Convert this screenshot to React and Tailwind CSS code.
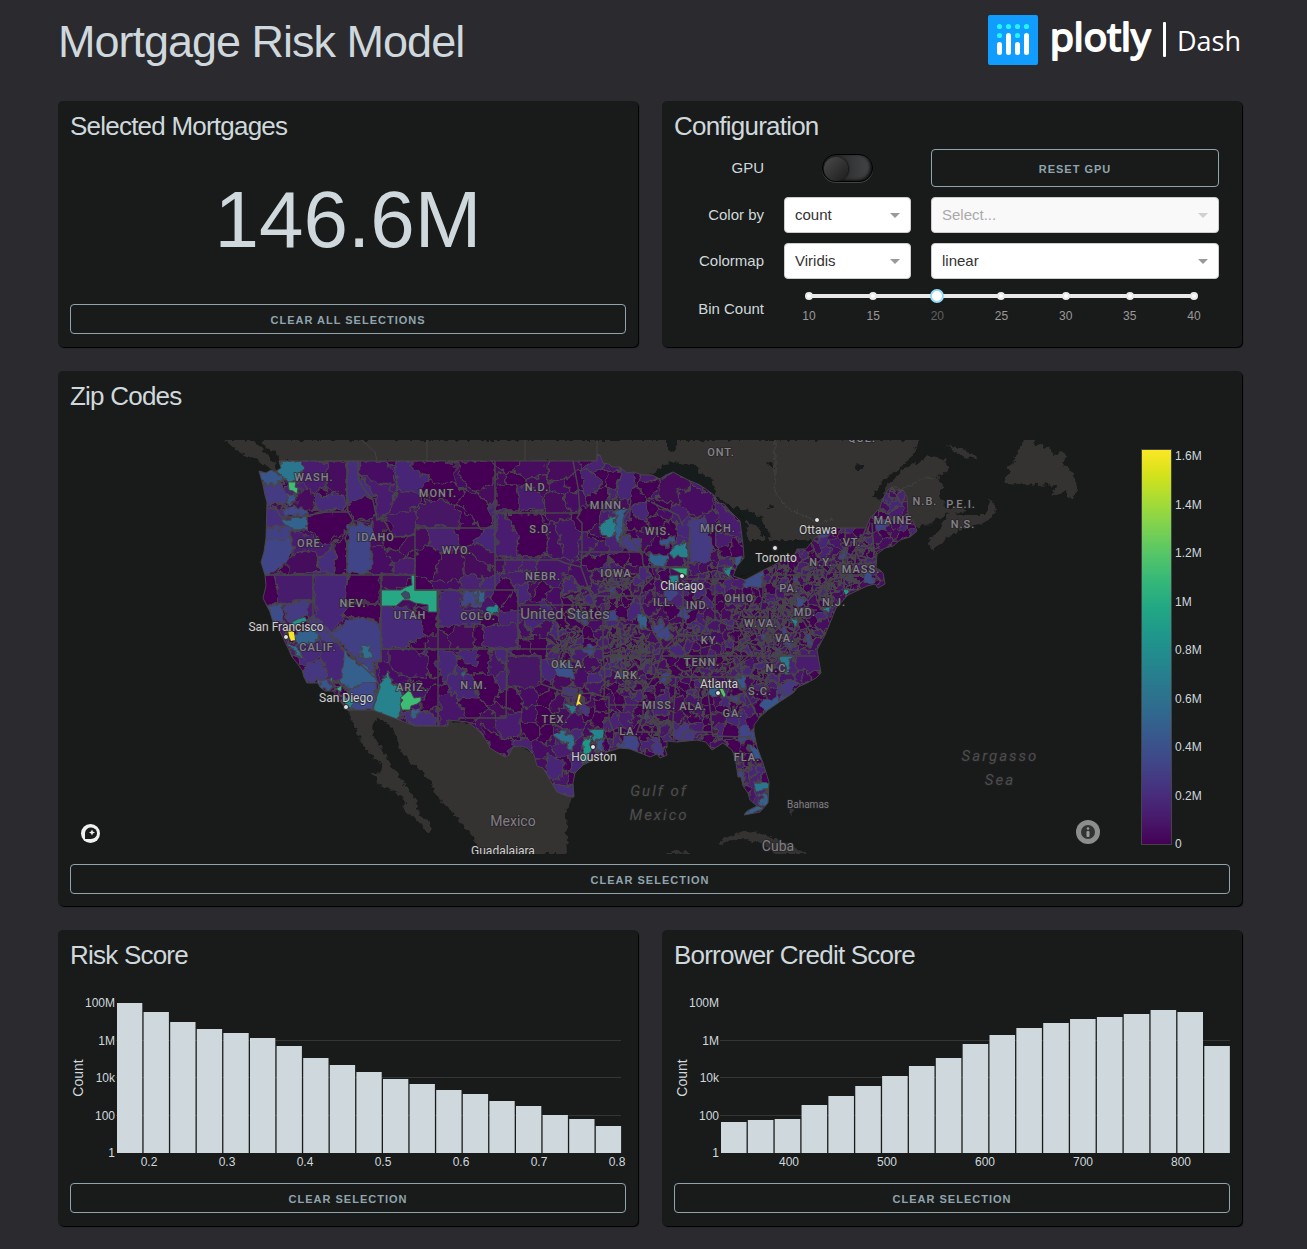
import React from "react";

/* ---------- map data ---------- */

const US_OUTLINE =
  "259,471 266,473 271,470 275,472 281,468 279,461 597,461 597,454 600,455 603,463 609,464 612,467 620,467 627,473 634,472 642,475 652,475 660,479 666,475 673,472 688,480 700,485 714,495 719,503 724,504 730,511 740,521 743,545 744,558 737,566 733,576 745,580 762,571 778,563 795,554 797,549 806,549 815,538 829,528 866,528 870,518 873,515 880,508 882,500 888,490 892,487 895,490 903,490 907,497 908,514 913,521 917,531 910,537 900,540 893,546 885,548 877,554 876,568 880,570 883,573 885,584 878,588 875,584 867,586 848,595 836,608 832,618 825,635 817,650 821,673 816,678 807,683 798,687 793,693 778,703 768,710 760,717 754,725 754,732 757,747 763,763 769,782 768,803 760,812 744,815 747,811 757,806 750,800 748,793 743,786 741,777 738,777 736,763 734,755 732,750 723,743 712,750 706,742 697,740 677,742 667,741 667,748 664,746 667,755 660,758 657,754 650,757 643,754 640,753 630,749 620,748 607,752 600,757 583,765 575,773 573,783 574,797 567,796 557,792 550,780 543,768 537,766 534,755 527,748 520,746 513,747 509,755 505,757 498,753 490,748 486,740 480,732 468,722 448,720 448,726 415,726 373,710 347,710 337,697 333,691 325,691 320,687 318,683 307,683 304,677 302,670 297,663 292,657 289,650 285,642 278,627 273,622 270,612 263,598 266,586 265,575 261,562 264,552 266,538 267,502 265,495 263,485";

const LAND = [
  "225,440 253,440 262,449 276,465 275,472 262,462 245,455 236,450",
  "262,440 920,440 912,455 900,468 885,478 872,497 880,500 890,482 905,468 928,457 945,459 948,470 935,477 943,485 940,495 946,508 960,515 985,515 990,498 997,510 985,522 955,532 945,540 933,550 927,542 940,530 949,512 930,524 917,527 900,540 600,540 590,461 279,461 276,452 265,447",
  "1023,440 1035,440 1034,446 1043,443 1044,449 1050,447 1053,456 1063,450 1066,456 1063,464 1070,470 1077,480 1078,492 1070,499 1066,490 1060,493 1052,497 1056,486 1047,484 1040,485 1004,483 1010,472 1006,467 1013,465 1018,450",
  "946,445 955,447 968,451 977,459 965,457",
  "946,509 957,507 968,511 955,513",
  "347,708 373,706 415,722 448,720 480,725 510,740 545,762 560,788 573,795 566,813 567,840 568,854 480,854 473,837 453,813 440,800 434,790 430,780 421,772 408,760 400,750 393,728 380,718 372,722 373,735 385,755 398,775 416,800 420,818 428,820 432,830 427,833 420,822 404,810 405,803 397,792 380,785 372,774 382,773 383,765 376,760 362,745 358,735",
  "718,843 727,837 743,832 760,833 773,838 793,847 806,854 775,854 765,845 743,838 731,841 720,845",
  "665,854 675,851 690,852 690,854",
  "789,806 793,809 793,815 790,811",
];

const LAKES = [
  "645,481 655,470 664,465 674,462 690,465 697,465 700,474 712,478 716,497 745,515 749,545 757,570 735,580 725,560 720,510 700,490 673,474 660,480",
  "723,506 735,508 750,511 760,516 766,530 772,536 766,541 758,527 748,522 738,514",
  "733,577 745,578 765,566 790,558 796,556 800,546 779,547 785,543 810,541 812,546 800,552 797,558 760,575 745,584",
  "667,440 676,440 677,450 671,453 667,449",
  "767,462 774,464 774,468 769,466",
  "855,466 862,464 862,470 857,470",
  "768,505 774,506 772,508 768,508",
];

const PATCHES = [
  ["279,461 304,461 303,470 299,476 292,482 283,478 277,470", "#2a768e"],
  ["255,470 275,470 284,480 283,484 262,485", "#39558c"],
  ["260,485 284,484 287,500 285,504 262,505", "#443a83"],
  ["286,493 297,494 296,503 288,504", "#39568c"],
  ["304,461 326,461 326,483 315,495 300,482", "#481d6f"],
  ["299,490 312,488 315,510 297,510", "#46085c"],
  ["326,461 347,461 347,505 343,495 326,487", "#460b5e"],
  ["316,496 343,495 345,510 315,510", "#472c7a"],
  ["262,505 278,508 290,512 282,528 262,526", "#472d7b"],
  ["284,505 308,510 308,516 285,515", "#3f4889"],
  ["282,520 308,516 308,530 295,530 283,525", "#33638d"],
  ["308,515 325,511 350,510 352,520 347,530 335,538 328,543 318,540 308,530", "#440256"],
  ["258,528 292,528 291,540 258,540", "#423f85"],
  ["258,540 292,540 288,562 270,574 258,574", "#404588"],
  ["292,530 318,540 333,545 320,560 310,550 292,560", "#481f70"],
  ["288,560 298,552 315,550 320,565 320,574 288,574", "#460a5d"],
  ["320,560 334,545 335,574 320,574", "#472d7b"],
  ["335,544 347,532 347,574 335,574", "#440154"],
  ["348,461 359,461 359,478 372,490 375,495 352,505 348,505", "#472d7b"],
  ["348,505 365,496 376,500 377,515 372,522 352,518", "#450559"],
  ["360,475 392,487 393,505 382,518 376,512 376,497", "#481f70"],
  ["359,461 385,461 395,475 393,485 378,482 360,474", "#471063"],
  ["347,528 358,521 372,525 372,545 370,574 347,574", "#404588"],
  ["385,515 418,508 415,535 395,535", "#471668"],
  ["372,545 385,548 393,562 393,574 370,574", "#471063"],
  ["393,562 415,556 415,574 393,574", "#481b6d"],
  ["413,461 455,461 455,480 440,484 428,476 413,472", "#440154"],
  ["418,502 450,500 460,512 460,527 416,527", "#471365"],
  ["456,461 494,461 494,484 480,490 464,486", "#440154"],
  ["314,574 347,574 347,610 333,635 315,615", "#472878"],
  ["348,574 381,574 381,602 345,602", "#440154"],
  ["340,615 350,605 381,603 381,623 360,618", "#440154"],
  ["333,635 345,620 360,618 381,625 381,648 374,675", "#423f85"],
  ["361,646 371,646 371,657 361,658", "#2e6f8e"],
  ["274,574 314,574 314,600 300,600 280,605", "#471b6c"],
  ["260,574 274,574 280,605 268,605 260,598", "#450457"],
  ["283,605 308,600 308,615 290,625", "#443a83"],
  ["266,607 280,605 285,625 272,622", "#3d4e8a"],
  ["297,645 318,640 322,655 305,668 300,664", "#46297a"],
  ["318,640 335,637 345,655 342,680 328,682 322,660", "#472777"],
  ["303,667 322,660 328,682 305,683", "#453781"],
  ["314,615 333,635 340,645 322,640 310,630", "#443a83"],
  ["295,634 310,629 320,634 315,642 298,645", "#33628d"],
  ["285,643 297,648 303,657 296,655", "#2c728e"],
  ["343,650 375,675 377,680 360,685 348,690 342,680", "#34618d"],
  ["350,690 365,682 376,682 377,710 352,710", "#3e4a89"],
  ["343,694 356,700 352,706 343,706", "#238a8d"],
  ["318,682 330,684 328,692 320,688", "#39568c"],
  ["386,674 389,675 390,683 402,688 402,700 399,722 372,712 376,700 378,688", "#25838e"],
  ["399,714 408,712 432,712 437,727 415,727", "#472d7b"],
  ["410,713 422,706 422,710 414,718", "#34608d"],
  ["389,648 415,648 428,658 424,678 400,676 389,665", "#471164"],
  ["428,648 438,648 438,678 426,676", "#440154"],
  ["439,697 455,692 466,720 448,720 448,727 439,727", "#471668"],
  ["381,606 425,608 425,635 405,648 381,648", "#472a79"],
  ["415,608 437,612 437,635 425,635", "#440256"],
  ["438,590 460,590 462,610 482,612 480,625 438,625", "#472777"],
  ["460,592 475,590 480,600 478,608 465,605", "#3f4788"],
  ["475,590 485,592 484,602 477,602", "#33638d"],
  ["488,608 495,605 498,612 490,616", "#23888e"],
  ["483,626 517,624 518,648 484,648", "#481b6d"],
  ["496,512 505,514 518,535 519,558 496,558", "#481d6f"],
  ["505,513 540,514 548,540 545,557 520,557 518,535", "#450457"],
  ["518,485 535,488 545,505 542,511 518,510", "#481d6f"],
  ["496,485 517,485 518,511 496,511", "#450457"],
  ["600,530 605,520 615,516 618,529 607,538", "#27808e"],
  ["616,510 625,508 622,545 615,535", "#34618d"],
  ["622,536 642,540 640,552 622,548", "#443a83"],
  ["620,470 636,472 630,500 618,500", "#472777"],
  ["670,553 677,543 688,542 688,557 672,556", "#27818e"],
  ["648,555 668,555 666,567 652,566", "#33638d"],
  ["660,540 674,536 672,546 662,546", "#39568c"],
  ["660,479 673,472 688,480 687,492 676,505 658,500", "#46085c"],
  ["677,492 688,490 689,482 712,495 712,510 696,518 680,505", "#471063"],
  ["690,520 705,518 712,540 710,562 690,565", "#443a83"],
  ["714,498 740,522 742,540 720,528", "#481d6f"],
  ["723,568 732,567 733,573 728,579", "#24868e"],
  ["732,560 742,556 740,568", "#39568c"],
  ["743,578 762,570 762,586 745,588", "#3d4e8a"],
  ["843,591 852,587 846,598", "#1f9a8a"],
  ["820,607 833,607 827,613", "#24868e"],
  ["793,616 798,619 798,625 793,624", "#24868e"],
  ["793,596 808,600 800,606", "#3d4e8a"],
  ["862,575 872,572 872,582 864,582", "#3d4e8a"],
  ["781,655 791,656 788,665 790,673 785,671", "#2a788e"],
  ["708,687 716,685 720,695 712,698", "#34618d"],
  ["735,677 745,676 746,688 733,686", "#39568c"],
  ["760,702 778,696 782,706 765,714", "#39568c"],
  ["778,685 797,680 793,696 775,692", "#453781"],
  ["793,654 818,650 822,672 798,670", "#481b6d"],
  ["748,746 757,748 762,760 752,756", "#39568c"],
  ["754,782 770,782 770,790 758,790", "#2a768e"],
  ["761,795 769,793 768,806 760,803", "#34618d"],
  ["740,812 760,806 764,812 744,817", "#34618d"],
  ["737,770 745,776 742,782", "#414487"],
  ["589,730 602,728 602,738 594,743", "#24868e"],
  ["583,738 591,737 591,750 583,766", "#1f988b"],
  ["596,742 604,738 603,752 594,752", "#39568c"],
  ["552,735 562,730 575,735 573,750 563,743", "#2d718e"],
  ["563,702 570,703 577,708 572,714", "#2a788e"],
  ["563,686 575,688 578,698 566,694", "#453781"],
  ["580,705 590,704 588,716 580,712", "#453781"],
  ["555,665 570,661 575,680 557,675", "#3b518b"],
  ["582,650 593,645 593,657", "#3f4788"],
  ["624,733 638,740 640,753 624,748", "#404588"],
  ["650,735 660,742 667,755 655,755", "#453781"],
  ["461,672 467,671 465,678", "#34618d"],
  ["637,613 645,615 650,628 640,630", "#34618d"],
  ["652,622 662,620 660,634 653,632", "#414487"],
  ["456,650 478,648 476,665 466,666", "#472777"],
  ["506,655 540,656 542,682 526,690 508,684", "#471365"],
  ["498,718 520,712 520,735 505,738 494,728", "#481d6f"],
  ["480,722 495,735 512,742 508,757 490,748", "#450457"],
  ["546,755 565,762 560,780 548,778", "#472777"],
  ["550,784 575,787 575,797 555,794", "#472d7b"],
  ["673,734 684,722 694,732 694,740 675,742", "#453781"],
];

const CRISP = [
  ["381,590 401,590 406,587 412,585 411,575 415,574 415,590 437,590 437,612 428,612 428,605 415,603 409,600 403,600 396,606 381,606", "#27a884"],
  ["401,594 405,591 409,593 410,598 405,599", "#3b4a68"],
  ["288,482 296,482 295,487 298,488 297,494 293,491 289,490", "#3fbc73"],
  ["407,692 408,690 410,690 412,694 414,698 421,697 421,701 417,704 411,706 410,710 402,710 400,704 403,700 400,698", "#3dbc74"],
  ["288,630 290,627 291,631 294,632 295,640 291,641 289,636", "#f5e626"],
  ["579,693 581,694 580,698 579,701 582,705 579,704 576,706 577,702 578,698", "#f5e626"],
  ["719,688 723,688 726,695 724,698 721,693", "#54c568"],
  ["670,568 688,568 688,576 682,574", "#2ab07f"],
  ["669,576 678,575 679,582 671,584", "#23888e"],
  ["292,622 298,619 305,617 307,621 298,624 292,627", "#22908c"],
  ["336,689 342,685 341,692", "#2db27d"],
  ["330,679 332,677 332,683", "#2db27d"],
];

/* State borders as longitude,latitude runs. */
const BORDERS = [
  "-124,46.2 -123.2,46.15 -122.8,45.7 -121.2,45.65 -119.3,45.93 -119,46 -116.92,46",
  "-117.03,49 -117.03,46.4 -116.92,46 -116.5,45.5 -117.2,44.4 -117.03,44 -117.03,42",
  "-124.2,42 -111.05,42",
  "-116.05,49 -116.05,48 -115.6,47.4 -114.7,46.7 -114.4,45.5 -113.9,45.6 -113,44.45 -111.5,44.5 -111.05,44.7",
  "-111.05,45 -104.05,45",
  "-111.05,45 -111.05,41 -102.05,41 -102.05,37",
  "-104.05,49 -104.05,41",
  "-104.05,45.94 -96.56,45.94",
  "-104.05,43 -98.5,43 -97.9,42.8 -96.5,42.5",
  "-97.2,49 -96.8,47.5 -96.56,45.94 -96.85,45.6 -96.45,45.3 -96.45,43.5 -96.5,42.5 -95.8,41 -95.3,40 -94.6,39.1",
  "-96.6,43.5 -91.2,43.5",
  "-102.05,40 -95.3,40",
  "-114.04,37 -94.6,37",
  "-114.04,42 -114.04,36.2 -114.7,36.1 -114.6,35 -114.1,34.3 -114.5,33.5 -114.7,32.7",
  "-120,42 -120,39 -114.63,35",
  "-109.05,41 -109.05,31.33",
  "-103,37 -103.05,32 -106.6,32",
  "-103,36.5 -100,36.5 -100,34.55 -98.5,34.1 -97,33.8 -95.5,33.9 -94.5,33.6",
  "-94.6,39.1 -94.6,36.5 -94.43,35.4 -94.48,33.6 -94.04,33.55 -94.04,31.9 -93.6,31 -93.7,30",
  "-94.6,36.5 -90.2,36.5 -90.4,36 -89.7,36",
  "-95.75,40.6 -91.7,40.6 -91.4,40.4",
  "-94.04,33 -91.1,33",
  "-92.1,46.7 -92.3,46.1 -92.8,45.5 -92.8,44.75 -91.2,43.5 -91.1,42.7 -90.2,41.8 -91.1,41.2 -91.4,40.4 -91,39.5 -90.2,38.8 -90.2,38.2 -89.2,37 -89.5,36.5 -90,35.2 -91.1,33.9 -91.1,32.2 -91.6,31 -89.8,31 -89.6,30.2",
  "-90.4,46.6 -89,46.1 -88,45.8 -87.6,45.1",
  "-90.6,42.5 -87,42.5",
  "-87,45 -87.2,41.7",
  "-87.53,41.7 -87.53,39.3 -87.6,38.7 -88.1,37.9",
  "-89.2,37 -88.1,37.9 -87,37.9 -86,38 -85.5,38.7 -84.8,39.1 -83.7,38.65 -82.6,38.4 -81.8,39 -80.8,39.7 -80.52,40.6 -80.52,42",
  "-84.8,39.1 -84.8,41.7",
  "-87.2,41.73 -83.4,41.73",
  "-80.52,39.72 -75.8,39.72",
  "-79.76,42.3 -79.76,42 -75.35,42 -74.7,41.35 -75.1,40.6 -74.8,40.2 -75.5,39.7",
  "-89.5,36.55 -75.9,36.55",
  "-90.1,35 -83.1,35 -81.9,33.5 -81,32.1",
  "-81.7,36.6 -82.6,36 -84.3,35",
  "-88.2,35 -88.45,31.9 -88.4,30.3",
  "-85.6,35 -85.1,32.2 -85,31 -84.9,30.7 -82.2,30.6 -81.5,30.7",
  "-87.6,30.4 -87.6,31 -85,31",
  "-83.1,35 -82.3,35.2 -81,35.1 -80.8,34.8 -79.7,34.8 -78.6,33.9",
  "-82.6,38.4 -82,37.5 -83.7,36.6",
  "-82,37.5 -81.3,37.3 -80.3,37.6 -79,38.7 -78.3,39.4 -77.7,39.3 -77,38.9 -76.3,38",
  "-73.35,45 -73.3,42.75 -73.5,42.05 -73.5,41.2",
  "-71.5,45 -72.4,43.5 -72.5,42.73",
  "-73.3,42.73 -71,42.73",
  "-73.5,42.03 -71.8,42.03",
  "-71.05,45.3 -70.8,43.1",
];

const STRAIGHT_PROVINCES = [
  "-123,49 -95.15,49",
  "-120,60 -120,53.8 -117.5,51.2 -116.2,50.5 -114.6,49.5 -114.4,49",
  "-110,55 -110,49",
  "-101.4,55 -101.4,49",
  "-95.15,54 -95.15,49",
];
const RAGGED_PROVINCES = [
  "-79.5,52 -79.5,47.2 -78.5,46.3 -76.5,45.6 -75.5,45.3 -74.5,45.5",
  "-69.2,47.4 -68,47.4 -66.5,48 -65,48",
];

const project = (pair) => {
  const [lon, lat] = pair.split(",").map(Number);
  const merc = Math.asinh(Math.tan((lat * Math.PI) / 180));
  return `${Math.round((lon + 114.04) * 11.41 + 381)},${Math.round(461 - (merc - 0.98382) * 653.75)}`;
};
const projectRun = (run) => run.split(" ").map(project).join(" ");

/* Zip-code areas: Voronoi cells whose density follows the population. */
const DENSE = [
  [618, 580, 16], [602, 578, 10], [578, 598, 14], [562, 638, 16], [622, 642, 20], [612, 660, 12], [640, 652, 14],
  [745, 612, 14], [768, 622, 18], [790, 606, 16], [770, 646, 16], [740, 640, 10], [800, 632, 14], [812, 570, 14],
  [835, 575, 16], [850, 560, 12], [800, 590, 14], [730, 660, 10], [760, 672, 12], [690, 668, 12], [695, 690, 10],
  [628, 680, 12], [650, 720, 12], [655, 672, 8], [742, 765, 8], [762, 793, 7], [715, 572, 8], [862, 545, 10],
  [822, 592, 12], [775, 570, 10], [335, 683, 10], [298, 628, 6], [345, 485, 7], [735, 700, 8], [576, 698, 9], [685, 632, 12],
];
const SHADES = ["#440154", "#440154", "#450357", "#450559", "#46085c", "#460b5e", "#471063", "#471668", "#481b6d", "#482072", "#472878"];

function buildCells() {
  let state = 20231;
  const rand = () => {
    state = (state * 1664525 + 1013904223) % 4294967296;
    return state / 4294967296;
  };
  const inDense = (x, y) => DENSE.some(([cx, cy, r]) => (x - cx) ** 2 + (y - cy) ** 2 < r * r * 0.8);
  const seeds = [];
  const fill = (x0, x1, y0, y1, s) => {
    for (let y = y0; y < y1; y += s)
      for (let x = x0; x < x1; x += s) {
        const px = x + rand() * s;
        const py = y + rand() * s;
        if (!inDense(px, py)) seeds.push([px, py, s]);
      }
  };
  fill(250, 500, 445, 740, 26);
  fill(500, 596, 450, 590, 23);
  fill(500, 596, 590, 800, 17);
  fill(596, 690, 450, 570, 16);
  fill(690, 750, 470, 560, 15);
  fill(596, 690, 570, 765, 12);
  fill(690, 830, 560, 690, 10);
  fill(690, 800, 690, 820, 12);
  fill(750, 925, 480, 560, 10);
  fill(830, 895, 560, 620, 10);
  DENSE.forEach(([cx, cy, r]) => {
    for (let y = cy - r; y < cy + r; y += 5)
      for (let x = cx - r; x < cx + r; x += 5) {
        const edge = r * (0.6 + rand() * 0.5);
        if ((x - cx) ** 2 + (y - cy) ** 2 < edge * edge) seeds.push([x + rand() * 5, y + rand() * 5, 5]);
      }
  });
  return seeds.map(([x, y, s], i) => {
    const reach = Math.max(s * 2, 12);
    let poly = [[x - reach, y - reach], [x + reach, y - reach], [x + reach, y + reach], [x - reach, y + reach]];
    for (let j = 0; j < seeds.length && poly.length > 2; j++) {
      if (j === i) continue;
      const dx = seeds[j][0] - x;
      const dy = seeds[j][1] - y;
      if (Math.abs(dx) > reach * 2 || Math.abs(dy) > reach * 2) continue;
      const mid = (dx * (x + seeds[j][0]) + dy * (y + seeds[j][1])) / 2;
      const next = [];
      for (let k = 0; k < poly.length; k++) {
        const a = poly[k];
        const b = poly[(k + 1) % poly.length];
        const da = a[0] * dx + a[1] * dy - mid;
        const db = b[0] * dx + b[1] * dy - mid;
        if (da <= 0) next.push(a);
        if (da < 0 !== db < 0) {
          const t = da / (da - db);
          next.push([a[0] + (b[0] - a[0]) * t, a[1] + (b[1] - a[1]) * t]);
        }
      }
      poly = next;
    }
    return {
      points: poly.map((p) => `${p[0].toFixed(1)},${p[1].toFixed(1)}`).join(" "),
      fill: rand() < 0.04 && s < 13 ? "#414487" : SHADES[Math.floor(rand() * SHADES.length)],
      line: s === 5 ? 2 : 1.3,
    };
  });
}
const CELLS = buildCells();

const STATES = [
  ["WASH.", 314, 477], ["ORE.", 311, 543], ["IDAHO", 376, 537], ["MONT.", 438, 493], ["WYO.", 457, 550],
  ["N.D.", 537, 487], ["S.D.", 541, 529], ["NEBR.", 543, 576], ["MINN.", 608, 505], ["WIS.", 658, 531],
  ["IOWA", 616, 573], ["ILL.", 664, 602], ["IND.", 698, 605], ["MICH.", 718, 528], ["OHIO", 739, 598],
  ["PA.", 789, 588], ["N.Y.", 821, 562], ["VT.", 852, 542], ["MASS.", 861, 569], ["MAINE", 893, 520],
  ["N.B.", 925, 501], ["P.E.I.", 961, 504], ["N.S.", 963, 524], ["N.J.", 834, 602], ["MD.", 805, 612],
  ["W.VA.", 761, 623], ["VA.", 785, 638], ["KY.", 710, 640], ["TENN.", 702, 662], ["N.C.", 778, 668],
  ["S.C.", 760, 691], ["GA.", 733, 713], ["ALA.", 693, 706], ["MISS.", 659, 705], ["ARK.", 628, 675],
  ["LA.", 629, 731], ["OKLA.", 569, 664], ["TEX.", 555, 719], ["N.M.", 474, 685], ["ARIZ.", 412, 687],
  ["UTAH", 410, 615], ["NEV.", 353, 603], ["COLO.", 478, 616], ["CALIF.", 318, 647], ["FLA.", 747, 757],
  ["ONT.", 721, 452], ["QUE.", 862, 438],
];

const CITIES = [
  ["Ottawa", 818, 530, 817, 520], ["Toronto", 776, 558, 775, 548], ["Chicago", 682, 586, 682, 576],
  ["Atlanta", 719, 684, 718, 693], ["Houston", 594, 757, 593, 747], ["San Diego", 346, 698, 346, 707],
  ["San Francisco", 286, 627, 286, 637],
];

const VIRIDIS = ["#fde725", "#d2e21b", "#a5db36", "#7ad151", "#54c568", "#35b779", "#22a884", "#1f988b", "#23888e", "#2a788e", "#31688e", "#39568c", "#414487", "#472f7d", "#481a6c", "#440154"];
const SCALE = [["1.6M", 456], ["1.4M", 505], ["1.2M", 553], ["1M", 602], ["0.8M", 650], ["0.6M", 699], ["0.4M", 747], ["0.2M", 796], ["0", 844]];

function ZipMap() {
  return (
    <svg viewBox="70 440 1160 414" className="block h-auto w-full" role="img" aria-label="Zip code map">
      <defs>
        <clipPath id="us"><polygon points={US_OUTLINE} /></clipPath>
        <filter id="ragged" x="-5%" y="-5%" width="110%" height="110%">
          <feTurbulence type="fractalNoise" baseFrequency="0.13" numOctaves="2" seed="4" result="n" />
          <feDisplacementMap in="SourceGraphic" in2="n" scale="11" xChannelSelector="R" yChannelSelector="G" />
        </filter>
        <filter id="coast" x="-5%" y="-5%" width="110%" height="110%">
          <feTurbulence type="fractalNoise" baseFrequency="0.2" numOctaves="2" seed="9" result="n" />
          <feDisplacementMap in="SourceGraphic" in2="n" scale="7" xChannelSelector="R" yChannelSelector="G" />
        </filter>
        <linearGradient id="viridis" x1="0" y1="0" x2="0" y2="1">
          {VIRIDIS.map((c, i) => <stop key={c} offset={`${(i / 15) * 100}%`} stopColor={c} />)}
        </linearGradient>
      </defs>

      <g filter="url(#coast)">
        {LAND.map((p) => <polygon key={p} points={p} fill="#343332" />)}
        {LAKES.map((p) => <polygon key={p} points={p} fill="#191a1a" />)}
        <g fill="none" stroke="#434241">
          {RAGGED_PROVINCES.map((b) => <polyline key={b} points={projectRun(b)} />)}
        </g>
      </g>
      <g fill="none" stroke="#434241">
        {STRAIGHT_PROVINCES.map((b) => <polyline key={b} points={projectRun(b)} />)}
      </g>

      <g clipPath="url(#us)">
        <rect x="250" y="445" width="680" height="380" fill="#460b5e" />
        <g filter="url(#ragged)" stroke="#474549" strokeWidth="1.3">
          {CELLS.map((c, i) => <polygon key={i} points={c.points} fill={c.fill} strokeWidth={c.line} />)}
          {PATCHES.map(([p, f]) => <polygon key={p} points={p} fill={f} />)}
        </g>
        <g stroke="#474549">
          {CRISP.map(([p, f]) => <polygon key={p} points={p} fill={f} strokeWidth={f === "#f5e626" ? 0 : 1} />)}
        </g>
        <g fill="none" stroke="#464548" strokeWidth="1.5">
          {BORDERS.map((b) => <polyline key={b} points={projectRun(b)} />)}
        </g>
      </g>
      <polygon points={US_OUTLINE} fill="none" stroke="#464548" strokeWidth="1" />

      <g textAnchor="middle" fontFamily="Roboto, sans-serif" stroke="#232224" strokeWidth="2" strokeOpacity="0.6" strokeLinejoin="round" className="[paint-order:stroke]">
        <g fontSize="11" fontWeight="500" letterSpacing="1" fill="#85838a">
          {STATES.map(([t, x, y]) => <text key={t} x={x} y={y + 4}>{t}</text>)}
        </g>
        <g fill="#807e84">
          <text x="565" y="619" fontSize="15">United States</text>
          <text x="513" y="826" fontSize="14">Mexico</text>
          <text x="778" y="851" fontSize="14">Cuba</text>
          <text x="808" y="808" fontSize="10">Bahamas</text>
        </g>
        <g fill="#4d4d4e" fontSize="15" fontStyle="italic" letterSpacing="2">
          <text x="659" y="796">Gulf of</text>
          <text x="659" y="820">Mexico</text>
          <text x="1000" y="761">Sargasso</text>
          <text x="1000" y="785">Sea</text>
        </g>
        <g fill="#cfcfcf" fontSize="12">
          <text x="503" y="855">Guadalajara</text>
          {CITIES.map(([t, x, y]) => <text key={t} x={x} y={y + 4}>{t}</text>)}
        </g>
      </g>
      {CITIES.map(([t, , , cx, cy]) => <circle key={t} cx={cx} cy={cy} r="2.5" fill="#e5e5e5" stroke="#222" />)}

      <g>
        <circle cx="90.500" cy="833.500" r="9.500" fill="#f1f1f1" />
        <path d="M85 839v-6a6 5.700 0 1 1 6 6z" fill="#191a1a" />
        <path d="M92 829.500l.9 2.100 2.100.9-2.100.9-.9 2.100-.9-2.100-2.100-.9 2.100-.9z" fill="#f1f1f1" />
      </g>
      <g>
        <circle cx="1088" cy="832" r="12" fill="#8c8e8d" />
        <circle cx="1088" cy="832" r="7" fill="#323332" />
        <circle cx="1088" cy="828.500" r="1.300" fill="#9a9a9a" />
        <rect x="1086.500" y="831" width="3" height="6" rx="1" fill="#9a9a9a" />
      </g>

      <rect x="1141.500" y="449.500" width="30" height="395" fill="url(#viridis)" stroke="#444" />
      <g fill="#cfd8dc" fontSize="12" fontFamily="Liberation Sans, sans-serif">
        {SCALE.map(([t, y]) => <text key={t} x="1175" y={y + 4}>{t}</text>)}
      </g>
    </svg>
  );
}

/* ---------- histograms ---------- */

const RISK = {
  label: "Risk score histogram",
  start: 46, pitch: 26.6, end: 551,
  tops: [29, 38, 48, 55, 59, 64, 72, 84, 91, 98, 105, 110, 116, 120, 127, 132, 141, 145, 152],
  ticks: [["0.2", 79], ["0.3", 157], ["0.4", 235], ["0.5", 313], ["0.6", 391], ["0.7", 469], ["0.8", 547]],
};
const CREDIT = {
  label: "Borrower credit score histogram",
  start: 46, pitch: 26.85, end: 556,
  tops: [148, 146, 145, 131, 122, 112, 102, 92, 84, 70, 61, 54, 49, 45, 43, 40, 36, 38, 72],
  ticks: [["400", 115], ["500", 213], ["600", 311], ["700", 409], ["800", 507]],
};
const LEVELS = [["100M", 29], ["1M", 67], ["10k", 104], ["100", 142], ["1", 179]];

function Histogram({ data }) {
  return (
    <svg viewBox="0 0 556 210" className="block h-auto w-full overflow-visible" role="img" aria-label={data.label}>
      <g stroke="#343635">
        {LEVELS.slice(1, 4).map(([t, y]) => <line key={t} x1="46" x2={data.end} y1={y + 0.5} y2={y + 0.5} />)}
      </g>
      {data.tops.map((top, i) => (
        <rect key={i} x={data.start + 1 + i * data.pitch} y={top + 1} width={data.pitch - 1.3} height={179 - top} fill="#cfd8dc" />
      ))}
      <g fill="#cfd8dc" fontSize="12" fontFamily="Liberation Sans, sans-serif">
        {LEVELS.map(([t, y]) => <text key={t} x="45" y={y + 5} textAnchor="end">{t}</text>)}
        {data.ticks.map(([t, x]) => <text key={t} x={x} y="193" textAnchor="middle">{t}</text>)}
        <text x="13" y="105" fontSize="14" textAnchor="middle" transform="rotate(-90 13 105)">Count</text>
      </g>
    </svg>
  );
}

/* ---------- page parts ---------- */

function Card({ title, children, className = "pb-[13px]" }) {
  return (
    <section className={`flex flex-col rounded-[5px] bg-[#191b1a] px-3 pt-2 shadow-[1px_1px_1px_#000] ${className}`}>
      <h2 className="text-[26px] leading-[35px] tracking-[-0.03em]">{title}</h2>
      {children}
    </section>
  );
}

function OutlineButton({ children, tall }) {
  return (
    <button
      type="button"
      className={`w-full rounded-[4px] border border-[#90a4ae] pt-[2px] text-center text-[11px] font-semibold tracking-[1px] text-[#90a4ae] uppercase ${tall ? "h-[38px]" : "h-[30px]"}`}
    >
      {children}
    </button>
  );
}

function Dropdown({ id, label, options, disabled }) {
  return (
    <div className="relative">
      <select
        id={id}
        aria-label={label}
        disabled={disabled}
        className="block h-9 w-full appearance-none rounded-[4px] border border-[#ccc] bg-white pr-6 pl-[10px] text-[15px] text-[#333] disabled:bg-[#f9f9f9] disabled:text-[#aaa] disabled:opacity-100"
      >
        {options.map((o) => <option key={o}>{o}</option>)}
      </select>
      <span
        className={`pointer-events-none absolute top-4 right-[11px] border-x-[5px] border-t-[5px] border-x-transparent ${disabled ? "border-t-[#d0d0d0]" : "border-t-[#999]"}`}
      />
    </div>
  );
}

const MARKS = [10, 15, 20, 25, 30, 35, 40];

function BinSlider() {
  const [value, setValue] = React.useState(20);
  return (
    <div className="px-[25px]">
      <div className="relative h-[14px]">
        <div className="absolute inset-x-0 top-[5px] h-1 rounded-full bg-[#e9e9e9]" />
        <div className="absolute inset-x-0 top-[3px] flex justify-between">
          {MARKS.map((m) => (
            <span key={m} className="-mx-1 h-2 w-2 rounded-full border-2 border-[#e9e9e9] bg-white" />
          ))}
        </div>
        <input
          id="bins" type="range" min="10" max="40" value={value}
          onChange={(e) => setValue(Number(e.target.value))}
          className="absolute top-0 left-[-7px] h-[14px] w-[calc(100%+14px)] appearance-none bg-transparent [&::-webkit-slider-thumb]:h-[14px] [&::-webkit-slider-thumb]:w-[14px] [&::-webkit-slider-thumb]:appearance-none [&::-webkit-slider-thumb]:rounded-full [&::-webkit-slider-thumb]:border-2 [&::-webkit-slider-thumb]:border-[#96dbfa] [&::-webkit-slider-thumb]:bg-white"
        />
      </div>
      <div className="mt-1 flex justify-between text-xs leading-[18px]">
        {MARKS.map((m) => (
          <span key={m} className={`flex w-0 justify-center ${m === value ? "text-[#5d6162]" : "text-[#999]"}`}>{m}</span>
        ))}
      </div>
    </div>
  );
}

function Logo() {
  return (
    <svg width="256" height="52" viewBox="986 14 256 52" role="img" aria-label="plotly | Dash">
      <rect x="988" y="15" width="50" height="50" rx="2" fill="#119dff" />
      <g fill="#25f4f4">
        {[999, 1008, 1017, 1026].map((x) => <circle key={x} cx={x + 0.5} cy="26.500" r="2.600" />)}
        <circle cx="999.500" cy="35.500" r="2.600" />
        <circle cx="1017.500" cy="35.500" r="2.600" />
      </g>
      <g stroke="#fff" strokeWidth="5" strokeLinecap="round">
        <path d="M999.500 44.500v8M1008.500 35.500v17M1017.500 44.500v8M1026.500 35.500v17" />
      </g>
      <text x="1050" y="51" fontSize="39" fontWeight="500" fontFamily="Open Sans, sans-serif" fill="#fff" stroke="#fff" strokeWidth="2" strokeLinejoin="round">plotly</text>
      <rect x="1163" y="22" width="3" height="35" rx="1" fill="#fff" />
      <text x="1177" y="51" fontSize="27" fontWeight="400" fontFamily="Open Sans, sans-serif" fill="#fff">Dash</text>
    </svg>
  );
}

export default function App() {
  return (
    <div className="min-h-screen bg-[#2b2a2f] pr-[65px] pb-[22px] pl-[58px] font-['Liberation_Sans',Arial,sans-serif] text-[#cfd8dc]">
      <header className="flex h-[101px] items-start justify-between pt-3">
        <h1 className="text-[45px] leading-[60px] tracking-[-1px]">Mortgage Risk Model</h1>
        <div className="pt-[2px]"><Logo /></div>
      </header>

      <main className="grid grid-cols-2 gap-6">
        <Card title="Selected Mortgages">
          <div className="flex grow items-center justify-center pb-[9px] text-[80px] leading-[90px]">146.6M</div>
          <OutlineButton>Clear All Selections</OutlineButton>
        </Card>

        <Card title="Configuration">
          <div className="mt-[5px] grid grid-cols-[90px_127px_1fr] items-center gap-x-5 gap-y-[10px] pr-[11px] pb-[9px] text-right text-[15px]">
            <label htmlFor="gpu">GPU</label>
            <input
              id="gpu" type="checkbox"
              className="relative mx-auto h-7 w-[51px] appearance-none rounded-full border border-black bg-linear-to-r from-[#222] to-[#444547] shadow-[inset_-2px_-1px_3px_#111,0_1px_0_#444] before:absolute before:top-[2px] before:left-[1px] before:h-6 before:w-6 before:rounded-full before:bg-linear-to-br before:from-[#4b4b4b] before:to-[#1d1d1d] before:shadow-[1px_0_2px_#111] checked:before:left-6"
            />
            <OutlineButton tall>Reset GPU</OutlineButton>

            <label htmlFor="color">Color by</label>
            <Dropdown id="color" label="Color by" options={["count"]} />
            <Dropdown id="agg" label="Aggregation" options={["Select..."]} disabled />

            <label htmlFor="map">Colormap</label>
            <Dropdown id="map" label="Colormap" options={["Viridis"]} />
            <Dropdown id="transform" label="Transform" options={["linear"]} />

            <label htmlFor="bins" className="pt-1">Bin Count</label>
            <div className="col-span-2"><BinSlider /></div>
          </div>
        </Card>

        <Card title="Zip Codes" className="col-span-2 pb-3">
          <div className="pt-[26px] pb-[10px]"><ZipMap /></div>
          <OutlineButton>Clear Selection</OutlineButton>
        </Card>

        <Card title="Risk Score">
          <Histogram data={RISK} />
          <OutlineButton>Clear Selection</OutlineButton>
        </Card>

        <Card title="Borrower Credit Score">
          <Histogram data={CREDIT} />
          <OutlineButton>Clear Selection</OutlineButton>
        </Card>
      </main>
    </div>
  );
}
